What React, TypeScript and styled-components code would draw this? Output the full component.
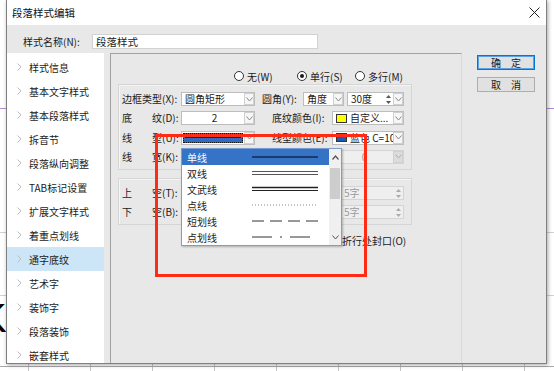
import React from "react";
import styled, { createGlobalStyle } from "styled-components";

const GlobalStyle = createGlobalStyle`
  html, body { margin: 0; padding: 0; background: #fff; }
  body {
    font-family: "Noto Sans CJK SC", "Liberation Sans", sans-serif;
    font-size: 10px;
    color: #1a1a1a;
    overflow: hidden;
  }
  * { box-sizing: border-box; }
`;

const Page = styled.div`
  position: relative;
  width: 554px;
  height: 371px;
  overflow: hidden;
  padding: 0 7px 7px 6px;
  background:
    linear-gradient(#b58bd8, #b58bd8) 0 108px / 100% 1px no-repeat,
    linear-gradient(#d2d2d2, #d2d2d2) 0 232px / 100% 1px no-repeat,
    linear-gradient(#d2d2d2, #d2d2d2) 0 295px / 100% 1px no-repeat,
    linear-gradient(#a8a8a8, #a8a8a8) 0 366px / 100% 1px no-repeat,
    linear-gradient(90deg, #c4c4c4 1px, transparent 1px) 28px 0 / 62px 100% repeat-x,
    #fff;
`;

const BgGlyph = styled.div`
  position: absolute;
  left: -20px;
  top: 296px;
  font: 40px "Liberation Sans", sans-serif;
  color: #000;
`;

const Dialog = styled.div`
  position: relative;
  z-index: 1;
  width: 541px;
  height: 364px;
  display: flex;
  flex-direction: column;
  border: 1px solid #808080;
  border-top: none;
  background: #e8e8e8;
  box-shadow: 1px 1px 4px rgba(0, 0, 0, 0.35);
`;

const TitleBar = styled.div`
  height: 25px;
  flex: none;
  display: flex;
  align-items: center;
  justify-content: space-between;
  padding: 0 6px 0 5px;
  background: #fff;
  font-size: 10.5px;
  color: #111;
`;

const Body = styled.div`
  flex: 1;
  min-height: 0;
  display: flex;
  flex-direction: column;
`;

const NameRow = styled.div`
  height: 28px;
  flex: none;
  display: flex;
  align-items: flex-start;
  padding: 9px 0 0 16px;
`;

const NameLabel = styled.div`
  width: 69px;
  line-height: 15px;
`;

const NameInput = styled.div`
  width: 226px;
  height: 15px;
  border: 1px solid #d2d2d2;
  background: #fff;
  padding-left: 3px;
  line-height: 13px;
  font-size: 10.5px;
`;

const Content = styled.div`
  flex: 1;
  min-height: 0;
  display: flex;
`;

const NavList = styled.div`
  width: 97px;
  flex: none;
  background: #fff;
  overflow: hidden;
  padding-top: 2px;
`;

const NavItem = styled.div<{ $active?: boolean }>`
  height: 24px;
  display: flex;
  align-items: center;
  gap: 7px;
  padding-left: 10px;
  white-space: nowrap;
  background: ${(p) => (p.$active ? "#cce6f7" : "transparent")};
`;

const MainPanel = styled.div`
  position: relative;
  margin-left: 6px;
  width: 352px;
  flex: none;
  border-top: 1px solid #a2a2a2;
  border-left: 1px solid #a2a2a2;
  border-right: 1px solid #d9d9d9;
  padding: 14px 0 0 7px;
  display: flex;
  flex-direction: column;
`;

const RadioRow = styled.div`
  height: 16px;
  display: flex;
  align-items: center;
  padding-left: 116px;
`;

const RadioItem = styled.div<{ $w: number }>`
  width: ${(p) => p.$w}px;
  display: flex;
  align-items: center;
  gap: 3px;
  white-space: nowrap;
`;

const RadioDot = styled.span<{ $on?: boolean }>`
  width: 10px;
  height: 10px;
  border-radius: 50%;
  border: 1px solid #333;
  background: #fff;
  display: flex;
  align-items: center;
  justify-content: center;
  &::after {
    content: "";
    width: 4px;
    height: 4px;
    border-radius: 50%;
    background: ${(p) => (p.$on ? "#1a1a1a" : "transparent")};
  }
`;

const Group = styled.div<{ $h: number; $top: number }>`
  width: 294px;
  height: ${(p) => p.$h}px;
  margin-top: ${(p) => p.$top}px;
  border: 1px solid #d5d5d5;
  box-shadow: inset 1px 1px 0 #f4f4f4;
  padding: 7px 7px 0 3px;
  display: flex;
  flex-direction: column;
`;

const Row = styled.div`
  height: 20px;
  display: flex;
  align-items: flex-start;
`;

const Label = styled.div<{ $w: number }>`
  width: ${(p) => p.$w}px;
  flex: none;
  line-height: 14px;
  white-space: nowrap;
`;

const RightPart = styled.div`
  margin-left: auto;
  display: flex;
  align-items: flex-start;
  gap: 3px;
`;

const Combo = styled.div<{ $w: number; $disabled?: boolean }>`
  width: ${(p) => p.$w}px;
  height: 14px;
  flex: none;
  display: flex;
  align-items: center;
  border: 1px solid ${(p) => (p.$disabled ? "#d4d4d4" : "#bdbdbd")};
  background: ${(p) => (p.$disabled ? "#efefef" : "#fff")};
  color: ${(p) => (p.$disabled ? "#9a9a9a" : "#1a1a1a")};
`;

const ComboText = styled.div<{ $clip?: boolean }>`
  flex: 1;
  min-width: 0;
  padding-left: 3px;
  line-height: 12px;
  white-space: nowrap;
  overflow: ${(p) => (p.$clip ? "hidden" : "visible")};
  display: flex;
  align-items: center;
  gap: 2px;
`;

const CenterValue = styled.span<{ $shift?: number }>`
  flex: 1;
  text-align: center;
  padding-left: ${(p) => p.$shift || 0}px;
`;

const ComboArrow = styled.div<{ $disabled?: boolean }>`
  width: 10px;
  height: 12px;
  flex: none;
  border: 1px solid #d0d0d0;
  background: ${(p) => (p.$disabled ? "#dcdcdc" : "#f6f6f6")};
  display: flex;
  align-items: center;
  justify-content: center;
`;

const SelectedLine = styled.div`
  flex: 1;
  height: 10px;
  margin: 0 1px;
  background: #2f6cc2;
  outline: 1px dotted #111;
  outline-offset: -1px;
  display: flex;
  align-items: center;
  padding: 0 2px;
  &::after {
    content: "";
    flex: 1;
    height: 1px;
    background: #0c1a33;
  }
`;

const Swatch = styled.span<{ $c: string }>`
  width: 11px;
  height: 9px;
  flex: none;
  background: ${(p) => p.$c};
  border: 1px solid #333;
  margin-right: 1px;
`;

const Spinner = styled.div`
  width: 7px;
  flex: none;
  display: flex;
  align-items: center;
  justify-content: center;
  margin-right: 1px;
`;

const CheckRow = styled.div`
  margin-top: 8px;
  height: 14px;
  display: flex;
  align-items: center;
  gap: 3px;
  padding-left: 210px;
  white-space: nowrap;
`;

const CheckBox = styled.span`
  width: 11px;
  height: 11px;
  border: 1px solid #333;
  background: #fff;
`;

const Dropdown = styled.div`
  position: absolute;
  left: 70px;
  top: 94px;
  width: 161px;
  height: 98px;
  display: flex;
  background: #fff;
  border: 1px solid #7c9dd0;
  box-shadow: 1px 1px 2px rgba(0, 0, 0, 0.25);
  z-index: 3;
`;

const DropList = styled.div`
  flex: 1;
  display: flex;
  flex-direction: column;
`;

const DropItem = styled.div<{ $sel?: boolean }>`
  height: 16px;
  display: flex;
  align-items: center;
  padding-left: 5px;
  background: ${(p) => (p.$sel ? "#3473c5" : "transparent")};
  color: ${(p) => (p.$sel ? "#fff" : "#1a1a1a")};
`;

const DropText = styled.div`
  width: 65px;
  flex: none;
  white-space: nowrap;
`;

const ScrollBar = styled.div`
  width: 12px;
  flex: none;
  background: #f0f0f0;
  display: flex;
  flex-direction: column;
  align-items: center;
`;

const ScrollBtn = styled.div`
  height: 16px;
  width: 100%;
  display: flex;
  align-items: center;
  justify-content: center;
`;

const ScrollTrack = styled.div`
  flex: 1;
  width: 100%;
  display: flex;
  justify-content: center;
  padding-top: 3px;
`;

const ScrollThumb = styled.div`
  width: 10px;
  height: 31px;
  background: #cdcdcd;
`;

const ButtonCol = styled.div`
  margin-left: 15px;
  padding-top: 2px;
  display: flex;
  flex-direction: column;
  gap: 7px;
`;

const Button = styled.div<{ $focus?: boolean }>`
  width: 58px;
  height: 15px;
  display: flex;
  align-items: center;
  justify-content: center;
  background: #e1e1e1;
  border: 1px solid ${(p) => (p.$focus ? "#0078d7" : "#adadad")};
  box-shadow: ${(p) => (p.$focus ? "inset 0 0 0 1px #5aa2e6" : "none")};
`;

const RedMark = styled.div`
  position: absolute;
  left: 155px;
  top: 134px;
  width: 212px;
  height: 143px;
  border: 3px solid #ff2b14;
  z-index: 5;
  pointer-events: none;
`;

const Chevron = ({ color = "#bdbdbd" }: { color?: string }) => (
  <svg width="5" height="8" viewBox="0 0 5 8">
    <polyline points="0.5,0.5 4,4 0.5,7.5" fill="none" stroke={color} strokeWidth="1" />
  </svg>
);

const DownArrow = ({ color = "#8a8a8a" }: { color?: string }) => (
  <svg width="7" height="5" viewBox="0 0 7 5">
    <polyline points="0.5,0.5 3.5,4 6.5,0.5" fill="none" stroke={color} strokeWidth="1" />
  </svg>
);

const UpArrow = () => (
  <svg width="7" height="5" viewBox="0 0 7 5">
    <polyline points="0.5,4.5 3.5,1 6.5,4.5" fill="none" stroke="#555" strokeWidth="1.2" />
  </svg>
);

const SpinIcon = ({ color = "#555" }: { color?: string }) => (
  <svg width="5" height="9" viewBox="0 0 5 9">
    <polygon points="2.5,0 5,3 0,3" fill={color} />
    <polygon points="0,6 5,6 2.5,9" fill={color} />
  </svg>
);

const CloseIcon = () => (
  <svg width="11" height="11" viewBox="0 0 11 11">
    <line x1="0.5" y1="0.5" x2="10.5" y2="10.5" stroke="#222" strokeWidth="1" />
    <line x1="10.5" y1="0.5" x2="0.5" y2="10.5" stroke="#222" strokeWidth="1" />
  </svg>
);

const LineSample = ({ kind, sel }: { kind: string; sel?: boolean }) => {
  const c = sel ? "#142848" : "#222";
  return (
    <svg width="66" height="8" viewBox="0 0 66 8">
      {kind === "single" && <line x1="0" y1="4" x2="66" y2="4" stroke={c} strokeWidth="1.6" />}
      {kind === "double" && (
        <>
          <line x1="0" y1="2.5" x2="66" y2="2.5" stroke="#555" strokeWidth="1" />
          <line x1="0" y1="5.5" x2="66" y2="5.5" stroke="#555" strokeWidth="1" />
        </>
      )}
      {kind === "thickthin" && (
        <>
          <line x1="0" y1="2.5" x2="66" y2="2.5" stroke="#222" strokeWidth="1.6" />
          <line x1="0" y1="5.5" x2="66" y2="5.5" stroke="#222" strokeWidth="1" />
        </>
      )}
      {kind === "dot" && (
        <line x1="0" y1="4" x2="66" y2="4" stroke="#888" strokeWidth="1" strokeDasharray="1 2" />
      )}
      {kind === "dash" && (
        <line x1="0" y1="4" x2="66" y2="4" stroke="#333" strokeWidth="1" strokeDasharray="12 6" />
      )}
      {kind === "dashdot" && (
        <line x1="0" y1="4" x2="66" y2="4" stroke="#333" strokeWidth="1" strokeDasharray="20 8 2 8" />
      )}
    </svg>
  );
};

const navItems = [
  "样式信息",
  "基本文字样式",
  "基本段落样式",
  "拆音节",
  "段落纵向调整",
  "TAB标记设置",
  "扩展文字样式",
  "着重点划线",
  "通字底纹",
  "艺术字",
  "装饰字",
  "段落装饰",
  "嵌套样式",
];

const lineTypes: [string, string][] = [
  ["单线", "single"],
  ["双线", "double"],
  ["文武线", "thickthin"],
  ["点线", "dot"],
  ["短划线", "dash"],
  ["点划线", "dashdot"],
];

export default function App() {
  return (
    <>
      <GlobalStyle />
      <Page>
        <BgGlyph>K</BgGlyph>
        <Dialog>
          <TitleBar>
            <span>段落样式编辑</span>
            <CloseIcon />
          </TitleBar>
          <Body>
            <NameRow>
              <NameLabel>样式名称(N):</NameLabel>
              <NameInput>段落样式</NameInput>
            </NameRow>
            <Content>
              <NavList>
                {navItems.map((t) => (
                  <NavItem key={t} $active={t === "通字底纹"}>
                    <Chevron />
                    <span>{t}</span>
                  </NavItem>
                ))}
              </NavList>
              <MainPanel>
                <RadioRow>
                  <RadioItem $w={63}>
                    <RadioDot />
                    无(W)
                  </RadioItem>
                  <RadioItem $w={58}>
                    <RadioDot $on />
                    单行(S)
                  </RadioItem>
                  <RadioItem $w={60}>
                    <RadioDot />
                    多行(M)
                  </RadioItem>
                </RadioRow>

                <Group $h={86} $top={0}>
                  <Row>
                    <Label $w={59}>边框类型(X):</Label>
                    <Combo $w={74}>
                      <ComboText>圆角矩形</ComboText>
                      <ComboArrow>
                        <DownArrow />
                      </ComboArrow>
                    </Combo>
                    <RightPart>
                      <Label $w={38}>圆角(Y):</Label>
                      <Combo $w={41}>
                        <ComboText>角度</ComboText>
                        <ComboArrow>
                          <DownArrow />
                        </ComboArrow>
                      </Combo>
                      <Combo $w={57}>
                        <ComboText>30度</ComboText>
                        <Spinner>
                          <SpinIcon />
                        </Spinner>
                        <ComboArrow>
                          <DownArrow />
                        </ComboArrow>
                      </Combo>
                    </RightPart>
                  </Row>
                  <Row>
                    <Label $w={59}>底　　纹(D):</Label>
                    <Combo $w={74}>
                      <ComboText>
                        <CenterValue>2</CenterValue>
                      </ComboText>
                      <ComboArrow>
                        <DownArrow />
                      </ComboArrow>
                    </Combo>
                    <RightPart>
                      <Label $w={57}>底纹颜色(I):</Label>
                      <Combo $w={72}>
                        <ComboText>
                          <Swatch $c="#ffff00" />
                          自定义...
                        </ComboText>
                        <ComboArrow>
                          <DownArrow />
                        </ComboArrow>
                      </Combo>
                    </RightPart>
                  </Row>
                  <Row>
                    <Label $w={59}>线　　型(U):</Label>
                    <Combo $w={74}>
                      <SelectedLine />
                      <ComboArrow>
                        <DownArrow />
                      </ComboArrow>
                    </Combo>
                    <RightPart>
                      <Label $w={57}>线型颜色(E):</Label>
                      <Combo $w={72}>
                        <ComboText $clip>
                          <Swatch $c="#1f5cb0" />
                          蓝色 C=100
                        </ComboText>
                        <ComboArrow>
                          <DownArrow />
                        </ComboArrow>
                      </Combo>
                    </RightPart>
                  </Row>
                  <Row>
                    <Label $w={59}>线　　宽(K):</Label>
                    <RightPart>
                      <Combo $w={72} $disabled>
                        <ComboText>
                          <CenterValue>0</CenterValue>
                        </ComboText>
                        <ComboArrow $disabled>
                          <DownArrow color="#b0b0b0" />
                        </ComboArrow>
                      </Combo>
                    </RightPart>
                  </Row>
                </Group>

                <Group $h={47} $top={8}>
                  <Row>
                    <Label $w={59}>上　　空(T):</Label>
                    <RightPart>
                      <Combo $w={64} $disabled>
                        <ComboText>5字</ComboText>
                        <Spinner>
                          <SpinIcon color="#aaa" />
                        </Spinner>
                      </Combo>
                    </RightPart>
                  </Row>
                  <Row>
                    <Label $w={59}>下　　空(B):</Label>
                    <RightPart>
                      <Combo $w={64} $disabled>
                        <ComboText>5字</ComboText>
                        <Spinner>
                          <SpinIcon color="#aaa" />
                        </Spinner>
                      </Combo>
                    </RightPart>
                  </Row>
                </Group>

                <CheckRow>
                  <CheckBox />
                  折行处封口(O)
                </CheckRow>

                <Dropdown>
                  <DropList>
                    {lineTypes.map(([t, k], i) => (
                      <DropItem key={t} $sel={i === 0}>
                        <DropText>{t}</DropText>
                        <LineSample kind={k} sel={i === 0} />
                      </DropItem>
                    ))}
                  </DropList>
                  <ScrollBar>
                    <ScrollBtn>
                      <UpArrow />
                    </ScrollBtn>
                    <ScrollTrack>
                      <ScrollThumb />
                    </ScrollTrack>
                    <ScrollBtn>
                      <DownArrow color="#555" />
                    </ScrollBtn>
                  </ScrollBar>
                </Dropdown>
              </MainPanel>
              <ButtonCol>
                <Button $focus>确　定</Button>
                <Button>取　消</Button>
              </ButtonCol>
            </Content>
          </Body>
        </Dialog>
        <RedMark />
      </Page>
    </>
  );
}
